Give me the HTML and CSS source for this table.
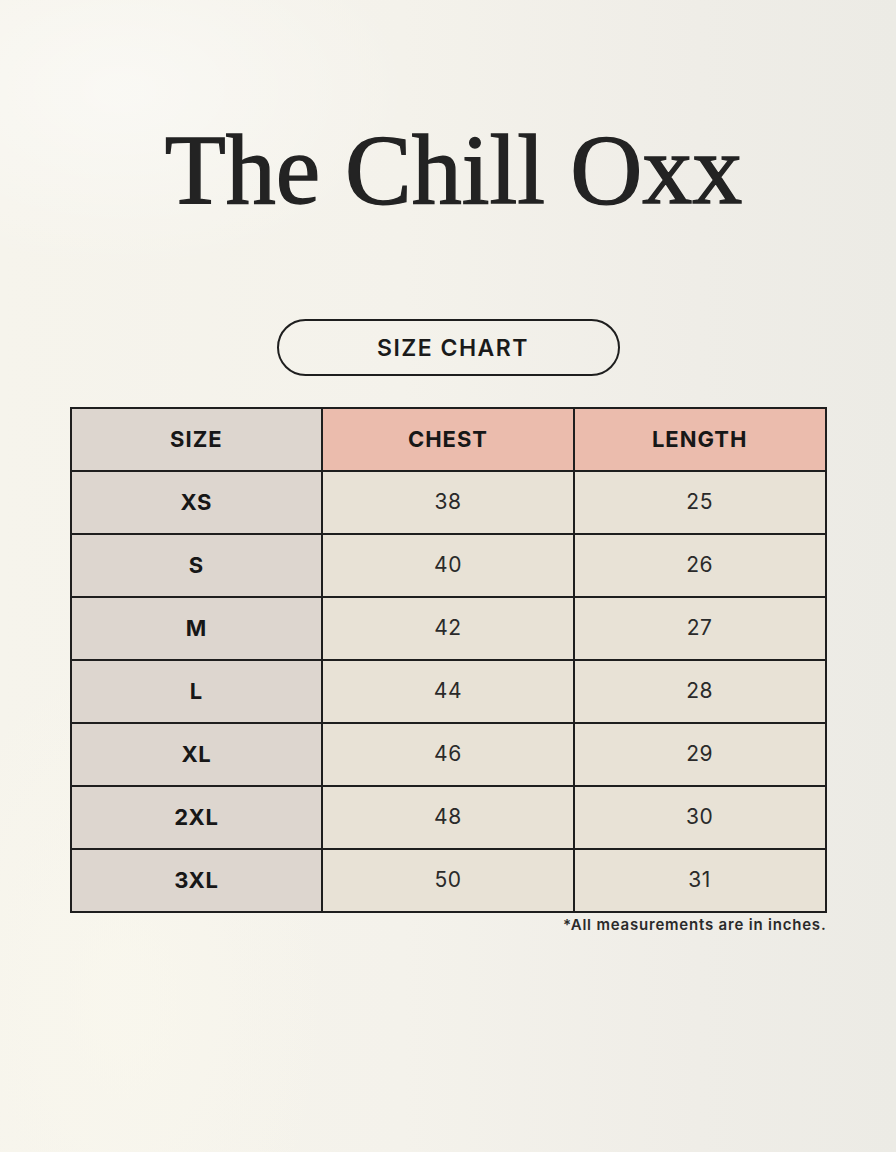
FILE: index.html
```html
<!DOCTYPE html>
<html lang="en">
<head>
<meta charset="utf-8">
<title>The Chill Oxx — Size Chart</title>
<link rel="stylesheet" href="styles.css">
</head>
<body>
<main class="page">
  <h1 class="brand">The Chill Oxx</h1>
  <div class="pill">SIZE CHART</div>
  <table class="chart">
    <thead>
      <tr>
        <th class="col-size">SIZE</th>
        <th class="col-head">CHEST</th>
        <th class="col-head">LENGTH</th>
      </tr>
    </thead>
    <tbody>
      <tr><td class="col-size">XS</td><td>38</td><td>25</td></tr>
      <tr><td class="col-size">S</td><td>40</td><td>26</td></tr>
      <tr><td class="col-size">M</td><td>42</td><td>27</td></tr>
      <tr><td class="col-size">L</td><td>44</td><td>28</td></tr>
      <tr><td class="col-size">XL</td><td>46</td><td>29</td></tr>
      <tr><td class="col-size">2XL</td><td>48</td><td>30</td></tr>
      <tr><td class="col-size">3XL</td><td>50</td><td>31</td></tr>
    </tbody>
  </table>
  <p class="note">*All measurements are in inches.</p>
</main>
</body>
</html>
```

FILE: styles.css
```css
html, body {
  margin: 0;
  padding: 0;
}
body {
  width: 896px;
  height: 1152px;
  overflow: hidden;
  background:
    radial-gradient(ellipse 420px 260px at 120px 90px, rgba(255,255,255,0.45), rgba(255,255,255,0) 70%),
    radial-gradient(ellipse 300px 500px at 120px 1000px, rgba(250,248,238,0.7), rgba(250,248,238,0) 70%),
    linear-gradient(90deg, #f6f4ec 0%, #f4f2eb 45%, #efede7 78%, #ecebe5 100%);
  font-family: "Inter", "Liberation Sans", sans-serif;
  color: #1c1c1c;
}
.page {
  display: flex;
  flex-direction: column;
  align-items: center;
  padding-top: 120px;
}
.brand {
  margin: 0;
  padding-left: 11px;
  font-family: "Liberation Serif", "Times New Roman", serif;
  font-weight: 400;
  font-size: 100px;
  line-height: 1;
  color: #232323;
  -webkit-text-stroke: 1.4px #232323;
  letter-spacing: 0;
}
.pill {
  margin-top: 99px;
  width: 343px;
  height: 57px;
  box-sizing: border-box;
  padding-left: 10px;
  border: 2px solid #1e1e1e;
  border-radius: 29px;
  display: flex;
  align-items: center;
  justify-content: center;
  font-size: 23px;
  font-weight: 600;
  letter-spacing: 1.5px;
  color: #1a1a1a;
}
.chart {
  margin-top: 31px;
  width: 757px;
  border-collapse: collapse;
  table-layout: fixed;
  border: 2px solid #1e1e1e;
}
.chart th, .chart td {
  border: 2px solid #1e1e1e;
  height: 63px;
  padding: 0 0 2px 0;
  text-align: center;
  vertical-align: middle;
  box-sizing: border-box;
}
.chart th {
  font-size: 22px;
  font-weight: 700;
  letter-spacing: 1px;
  color: #171717;
}
.chart td {
  font-size: 21px;
  font-weight: 400;
  color: #2a2a2a;
  background: #e8e2d6;
  letter-spacing: 0.6px;
}
.chart .col-size {
  background: #ddd6cf;
}
.chart td.col-size {
  font-weight: 700;
  font-size: 22px;
  color: #171717;
}
.chart .col-head {
  background: #ebbcad;
}
.note {
  margin: 2px 0 0 0;
  width: 757px;
  text-align: right;
  font-size: 15px;
  font-weight: 600;
  letter-spacing: 0.8px;
  color: #2a2a2a;
}
```
